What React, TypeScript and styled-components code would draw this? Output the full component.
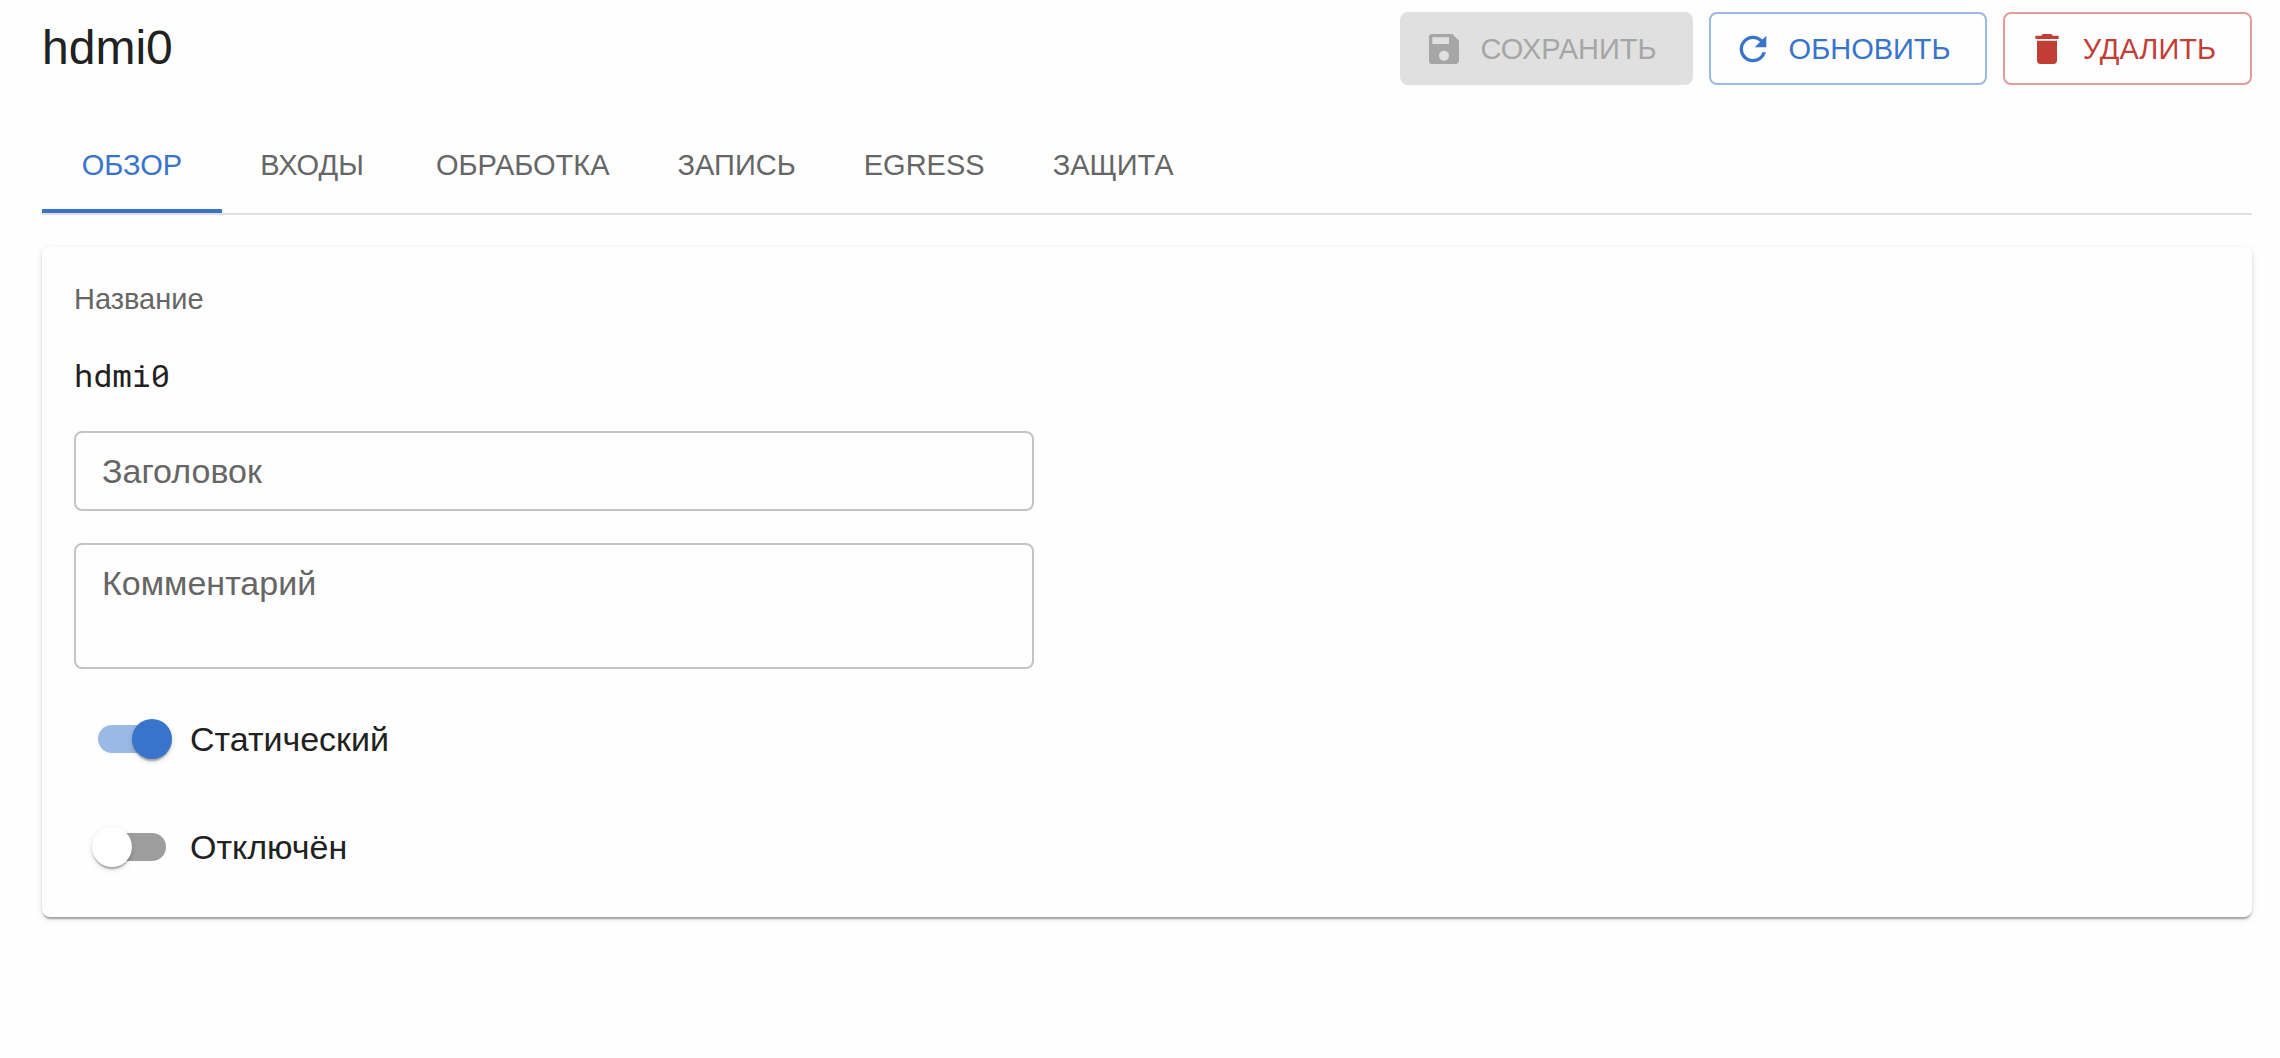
import React, { useState } from "react";
import styled, { createGlobalStyle, css } from "styled-components";
import { MdDelete, MdRefresh, MdSave } from "react-icons/md";

const color = {
  primary: "#3874cb",
  primaryLight: "#9bb9e5",
  danger: "#c13e37",
  dangerLight: "#e29d99",
  text: "#212121",
  secondary: "#666666",
  outline: "#c4c4c4",
  divider: "#e0e0e0",
  disabled: "#a6a6a6",
};

const GlobalStyle = createGlobalStyle`
  *, *::before, *::after { box-sizing: border-box; }
  body {
    margin: 0;
    background: #fefefe;
    color: ${color.text};
    font-family: "Liberation Sans", Helvetica, Arial, sans-serif;
    font-size: 34px;
    line-height: 48px;
  }
`;

const Page = styled.main`
  display: flex;
  flex-direction: column;
  gap: 32px;
  padding: 12px 28px 32px 42px;
`;

const Header = styled.header`
  display: flex;
  flex-wrap: wrap;
  align-items: flex-start;
  justify-content: space-between;
  gap: 16px;
`;

const Title = styled.h1`
  margin: 0;
  font-size: 48px;
  font-weight: 400;
  line-height: 72px;
`;

const Actions = styled.div`
  display: flex;
  flex-wrap: wrap;
  gap: 16px;
`;

type Tone = "primary" | "danger";

const tones = {
  primary: css`
    color: ${color.primary};
    border-color: ${color.primaryLight};
  `,
  danger: css`
    color: ${color.danger};
    border-color: ${color.dangerLight};
  `,
};

const Button = styled.button<{ $tone: Tone }>`
  display: inline-flex;
  align-items: center;
  gap: 16px;
  height: 73px;
  padding: 0 34px 0 22px;
  border: 2px solid;
  border-radius: 8px;
  background: transparent;
  font: inherit;
  font-size: 29px;
  text-transform: uppercase;
  cursor: pointer;
  ${({ $tone }) => tones[$tone]}

  svg {
    width: 40px;
    height: 40px;
  }

  &:disabled {
    color: ${color.disabled};
    background: ${color.divider};
    border-color: ${color.divider};
    cursor: default;
  }
`;

const TabList = styled.div`
  display: flex;
  overflow-x: auto;
  overflow-y: hidden;
  border-bottom: 2px solid ${color.divider};
`;

const Tab = styled.button<{ $active: boolean }>`
  flex: none;
  min-width: 180px;
  height: 96px;
  padding: 4px 34px 0;
  border: 0;
  border-bottom: 4px solid ${({ $active }) => ($active ? color.primary : "transparent")};
  background: transparent;
  color: ${({ $active }) => ($active ? color.primary : color.secondary)};
  font: inherit;
  font-size: 29px;
  text-transform: uppercase;
  cursor: pointer;
`;

const Card = styled.section`
  padding: 32px;
  border-radius: 8px;
  background: #fefefe;
  box-shadow:
    0 4px 2px -2px rgba(0, 0, 0, 0.2),
    0 2px 2px 0 rgba(0, 0, 0, 0.14),
    0 2px 6px 0 rgba(0, 0, 0, 0.12);
`;

const Form = styled.form`
  display: flex;
  flex-direction: column;
  gap: 32px;
  max-width: 960px;
`;

const Caption = styled.div`
  color: ${color.secondary};
  font-size: 29px;
  line-height: 40px;
`;

const Code = styled.div`
  font-family: "Roboto Mono", "Noto Sans Mono", "DejaVu Sans Mono", monospace;
  font-size: 32px;
`;

const fieldStyle = css`
  display: block;
  width: 100%;
  padding: 14px 26px;
  border: 2px solid ${color.outline};
  border-radius: 8px;
  background: transparent;
  color: ${color.text};
  font: inherit;

  &::placeholder {
    color: ${color.secondary};
    opacity: 1;
  }

  &:focus {
    outline: none;
    border-color: ${color.primary};
  }
`;

const TextField = styled.input`
  ${fieldStyle}
  height: 80px;
`;

const TextArea = styled.textarea`
  ${fieldStyle}
  height: 126px;
  resize: none;
`;

const SwitchRow = styled.label`
  display: flex;
  align-items: center;
  align-self: flex-start;
  cursor: pointer;
`;

const Switch = styled.input`
  appearance: none;
  position: relative;
  flex: none;
  width: 68px;
  height: 28px;
  margin: 24px;
  border-radius: 14px;
  background: #9e9e9e;
  cursor: pointer;

  &::after {
    content: "";
    position: absolute;
    top: -6px;
    left: -6px;
    width: 40px;
    height: 40px;
    border-radius: 50%;
    background: #ffffff;
    box-shadow:
      0 4px 2px -2px rgba(0, 0, 0, 0.2),
      0 2px 2px 0 rgba(0, 0, 0, 0.14),
      0 2px 6px 0 rgba(0, 0, 0, 0.12);
  }

  &:checked {
    background: ${color.primaryLight};
  }

  &:checked::after {
    left: 34px;
    background: ${color.primary};
  }
`;

const tabs = ["Обзор", "Входы", "Обработка", "Запись", "Egress", "Защита"];

export default function App() {
  const [active, setActive] = useState(tabs[0]);

  return (
    <>
      <GlobalStyle />
      <Page>
        <Header>
          <Title>hdmi0</Title>
          <Actions>
            <Button type="button" $tone="primary" disabled>
              <MdSave aria-hidden />
              Сохранить
            </Button>
            <Button type="button" $tone="primary">
              <MdRefresh aria-hidden />
              Обновить
            </Button>
            <Button type="button" $tone="danger">
              <MdDelete aria-hidden />
              Удалить
            </Button>
          </Actions>
        </Header>

        <TabList role="tablist">
          {tabs.map((name) => (
            <Tab
              key={name}
              type="button"
              role="tab"
              aria-selected={name === active}
              $active={name === active}
              onClick={() => setActive(name)}
            >
              {name}
            </Tab>
          ))}
        </TabList>

        <Card>
          <Form>
            <Caption>Название</Caption>
            <Code>hdmi0</Code>
            <TextField type="text" placeholder="Заголовок" aria-label="Заголовок" />
            <TextArea placeholder="Комментарий" aria-label="Комментарий" />
            <SwitchRow>
              <Switch type="checkbox" role="switch" defaultChecked />
              Статический
            </SwitchRow>
            <SwitchRow>
              <Switch type="checkbox" role="switch" />
              Отключён
            </SwitchRow>
          </Form>
        </Card>
      </Page>
    </>
  );
}
